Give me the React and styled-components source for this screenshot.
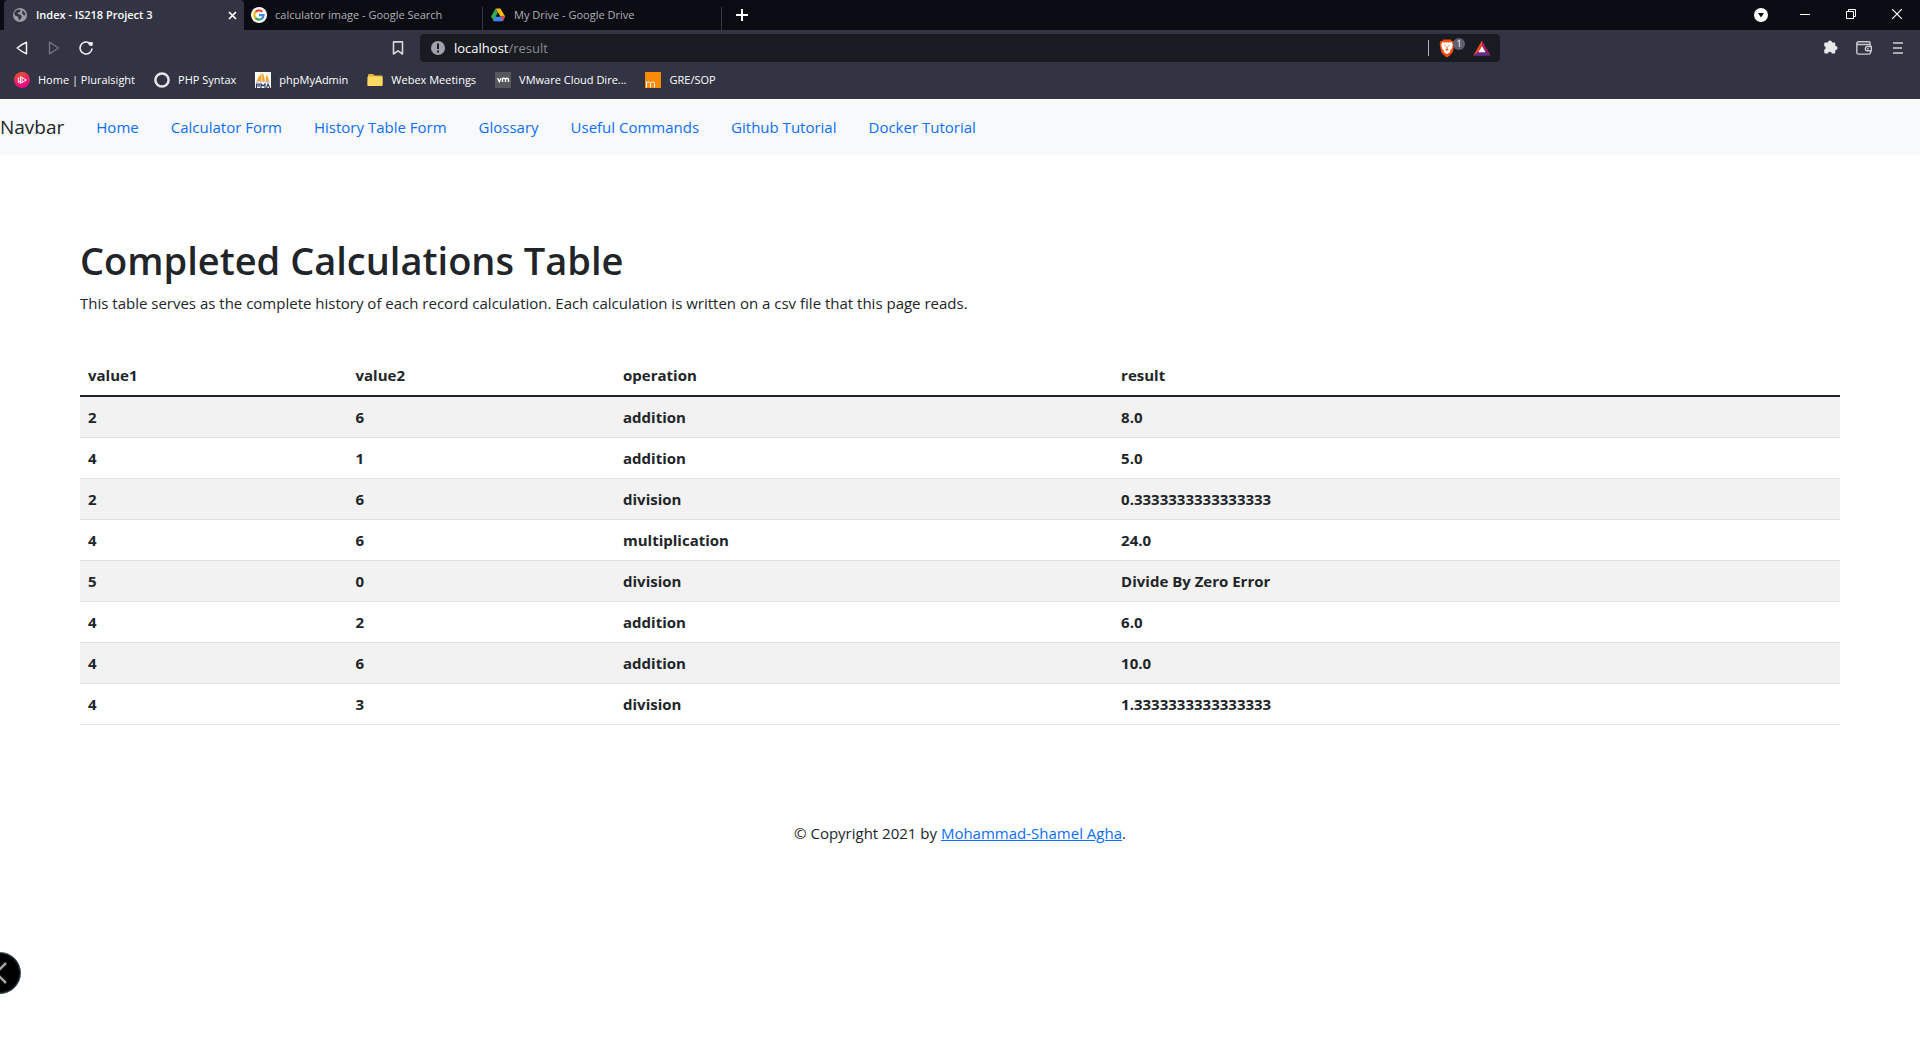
import React from 'react';
import styled, { createGlobalStyle } from 'styled-components';

const GlobalStyle = createGlobalStyle`
  *, *::before, *::after { box-sizing: border-box; }
  body {
    margin: 0;
    background: #fff;
    color: #212529;
    font-family: "Segoe UI", "Open Sans", "Noto Sans", sans-serif;
    font-size: 15px;
    line-height: 24px;
  }
  button { font: inherit; border: 0; background: none; padding: 0; color: inherit; }
  svg { display: block; flex: none; }
`;

/* ---------- browser window ---------- */

const Chrome = styled.header`
  background: #323443;
  color: #fff;
  font-size: 11px;
  line-height: 16px;
`;

const TabStrip = styled.div`
  display: flex;
  align-items: stretch;
  height: 30px;
  padding-left: 4px;
  background: #0b0b14;
`;

const Tab = styled.div`
  display: flex;
  align-items: center;
  gap: 8px;
  width: ${p => (p.$active ? 240 : 239)}px;
  padding: 0 7px 0 ${p => (p.$active ? 8 : 7)}px;
  border-radius: ${p => (p.$active ? '4px 4px 0 0' : '0')};
  background: ${p => (p.$active ? '#323443' : 'transparent')};
  color: ${p => (p.$active ? '#fff' : '#b0b1b5')};
  font-weight: ${p => (p.$active ? 600 : 400)};
`;

const TabTitle = styled.span`
  flex: 1;
  white-space: nowrap;
`;

const TabDivider = styled.span`
  align-self: flex-end;
  width: 1px;
  height: 23px;
  margin-right: -7px;
  background: #38393f;
`;

const IconButton = styled.button`
  display: flex;
  align-items: center;
  justify-content: center;
  width: ${p => p.$w || 32}px;
  height: ${p => p.$h || 28}px;
`;

const WindowControls = styled.div`
  display: flex;
  margin-left: auto;
`;

const Toolbar = styled.div`
  display: grid;
  grid-template-columns: 1fr minmax(0, 1080px) 1fr;
  padding-top: 4px;
`;

const ToolGroup = styled.div`
  display: flex;
  justify-content: ${p => (p.$end ? 'flex-end' : 'flex-start')};
  padding: 0 ${p => (p.$end ? 5 : 6)}px 0 6px;
`;

const BookmarkSlot = styled.div`
  display: flex;
  margin-left: auto;
`;

const AddressBar = styled.div`
  display: flex;
  align-items: center;
  height: 28px;
  padding: 0 7px 0 10px;
  border-radius: 4px;
  background: #191b22;
  font-size: 13px;
`;

const Address = styled.div`
  flex: 1;
  padding-left: 8px;
  color: #8a8b8f;
`;

const Host = styled.span`
  color: #fff;
`;

const BarDivider = styled.span`
  width: 1px;
  height: 16px;
  margin-right: 10px;
  background: #b5b6ba;
`;

const ShieldButton = styled.button`
  position: relative;
  width: 26px;
  height: 20px;
  margin-right: 6px;
`;

const ShieldCount = styled.span`
  position: absolute;
  top: 0;
  right: 0;
  min-width: 12px;
  border-radius: 6px;
  background: #5f6172;
  font-size: 9px;
  line-height: 12px;
  text-align: center;
`;

const BookmarkBar = styled.nav`
  display: flex;
  gap: 19px;
  height: 37px;
  padding: 10px 14px;
`;

const BookmarkLink = styled.a`
  display: flex;
  align-items: center;
  gap: 8px;
  height: 16px;
  color: #fff;
  text-decoration: none;
  white-space: nowrap;
`;

/* ---------- page ---------- */

const Navbar = styled.nav`
  display: flex;
  align-items: center;
  height: 56px;
  background: #f8f9fa;
`;

const Brand = styled.a`
  margin-right: 16px;
  color: #212529;
  font-size: 19px;
  text-decoration: none;
`;

const NavList = styled.ul`
  display: flex;
  margin: 0;
  padding: 0;
  list-style: none;
`;

const NavLink = styled.a`
  display: block;
  padding: 8px 16px;
  color: #0d6efd;
  text-decoration: none;
`;

const Main = styled.main`
  padding: 80px;
`;

const Title = styled.h1`
  margin: 0 0 6px;
  font-size: 38px;
  font-weight: 600;
  line-height: 50px;
`;

const Lead = styled.p`
  margin: 0 0 40px;
`;

const Table = styled.table`
  width: 100%;
  margin-bottom: 16px;
  border-collapse: collapse;
  table-layout: fixed;
  text-align: left;
  font-weight: 700;
`;

const Col = styled.col`
  width: ${p => p.$w};
`;

const HeadCell = styled.th`
  height: 41px;
  padding: 8px;
  border-bottom: 2px solid #212529;
`;

const Row = styled.tr`
  background: ${p => (p.$striped ? '#f2f2f2' : '#fff')};
`;

const Cell = styled.td`
  padding: 8px;
  border-bottom: 1px solid #dee2e6;
`;

const Footer = styled.footer`
  text-align: center;
`;

const AuthorLink = styled.a`
  color: #0d6efd;
`;

const DrawerHandle = styled.button`
  position: fixed;
  left: -21px;
  bottom: 46px;
  display: flex;
  align-items: center;
  justify-content: flex-end;
  width: 42px;
  height: 42px;
  && { padding-right: 13px; border: 1px solid #3b5960; background: #000; }
  border-radius: 50%;
  box-shadow: inset 0 0 0 1px #1b1b1b;
`;

/* ---------- icons ---------- */

const Globe = () => (
  <svg width="16" height="16" viewBox="0 0 16 16">
    <circle cx="8" cy="8" r="7" fill="#9a9ca5" />
    <path d="M2.6 5.2C3.4 3.6 5.4 2.3 7.2 2.4L8.6 3.6 8 5 6.2 5.6 5.6 7 8 7.6 9.8 9 9.2 11 7.6 13.6 6.4 11.6 6.2 9.8 4 9 2.3 7.6Z" fill="#323443" />
    <path d="M10 3.2 12.2 4.8 13.5 7.6 12.6 8.8 11.2 7.6 10 6.8 10.6 5Z" fill="#323443" />
  </svg>
);

const GoogleLogo = () => (
  <svg width="16" height="16" viewBox="0 0 16 16">
    <circle cx="8" cy="8" r="8" fill="#fff" />
    <g fill="none" strokeWidth="2.2">
      <path d="M4.5 5.1A4.6 4.6 0 0 1 11.3 4.8" stroke="#ea4335" />
      <path d="M4.5 5A4.6 4.6 0 0 0 4.5 11" stroke="#fbbc05" />
      <path d="M4.5 11A4.6 4.6 0 0 0 11 11.5" stroke="#34a853" />
      <path d="M8 8.2H12.6A4.6 4.6 0 0 1 10.8 11.7" stroke="#4285f4" />
    </g>
  </svg>
);

const DriveLogo = () => (
  <svg width="16" height="16" viewBox="0 0 16 16">
    <path d="M5.6 1.5H10.4L15.2 9.6H10.3Z" fill="#fbbc04" />
    <path d="M5.6 1.5 8 5.8 3.6 13.8 1 9.5Z" fill="#34a853" />
    <path d="M5.2 9.6H15.2L12.7 14.2H3.2Z" fill="#4285f4" />
    <path d="M10.5 9.6H15.2L12.9 14Z" fill="#ea4335" />
    <path d="M8 5.8 10.2 9.6H5.8Z" fill="#0b0b14" />
  </svg>
);

const CloseTab = () => (
  <svg width="9" height="9" viewBox="0 0 9 9"><path d="M1 1 8 8M8 1 1 8" stroke="#fff" strokeWidth="1.7" /></svg>
);
const Plus = () => (
  <svg width="12" height="12" viewBox="0 0 12 12"><path d="M6 0V12M0 6H12" stroke="#fff" strokeWidth="2" /></svg>
);
const TabSearch = () => (
  <svg width="14" height="14" viewBox="0 0 14 14"><circle cx="7" cy="7" r="7" fill="#fff" /><path d="M4 5H10L7 9.5Z" fill="#0b0b14" /></svg>
);
const Minimise = () => (
  <svg width="10" height="10" viewBox="0 0 10 10"><path d="M0 5.5H10" stroke="#fff" /></svg>
);
const Restore = () => (
  <svg width="10" height="10" viewBox="0 0 10 10"><path d="M.5 2.5H7.5V9.5H.5ZM2.5 2.5V.5H9.5V7.5H7.5" fill="none" stroke="#fff" /></svg>
);
const CloseWindow = () => (
  <svg width="10" height="10" viewBox="0 0 10 10"><path d="M0 0 10 10M10 0 0 10" stroke="#fff" strokeWidth="1.2" /></svg>
);
const Back = () => (
  <svg width="12" height="14" viewBox="0 0 12 14"><path d="M10.5 1.2V12.8Q6 11 1.2 7 6 3 10.5 1.2Z" fill="none" stroke="#f0f0f2" strokeWidth="1.5" strokeLinejoin="round" /></svg>
);
const Forward = () => (
  <svg width="12" height="14" viewBox="0 0 12 14"><path d="M1.5 1.2V12.8L10.5 7Z" fill="none" stroke="#6f717e" strokeWidth="1.4" strokeLinejoin="round" /></svg>
);
const Reload = () => (
  <svg width="16" height="16" viewBox="0 0 16 16">
    <path d="M11.3 3A6 6 0 1 0 14 8.5" fill="none" stroke="#f0f0f2" strokeWidth="1.6" />
    <path d="M10 2.6Q11.8 3 12.3 1.7L15 2.5 14.4 6 11 5.6Z" fill="#f0f0f2" />
  </svg>
);
const Ribbon = () => (
  <svg width="12" height="14" viewBox="0 0 12 14"><path d="M1.5.9H10.5V13L6 9.8 1.5 13Z" fill="none" stroke="#d5d6da" strokeWidth="1.6" strokeLinejoin="round" /></svg>
);
const Info = () => (
  <svg width="16" height="16" viewBox="0 0 16 16"><circle cx="8" cy="8" r="7" fill="#a0a2ab" /><path d="M7 3.5H9V9H7ZM7 10.5H9V12.5H7Z" fill="#191b22" /></svg>
);
const Shield = () => (
  <svg width="16" height="19" viewBox="0 0 16 19">
    <path d="M4.5.5H11.5L13 2 14.5 2 15.3 4.8 14 12.5Q13.5 14.5 8 18.5 2.5 14.5 2 12.5L.7 4.8 1.5 2H3Z" fill="#fb4b0b" />
    <path d="M3.6 3 6.2 3.6 8 3.2 9.8 3.6 12.4 3 13.7 5.4 13 9.5 11.2 11.5 11.2 13 8 15.2 4.8 13 4.8 11.5 3 9.5 2.3 5.4Z" fill="#fff" />
    <path d="M4.5 6.3 7 6.8V7.6ZM11.5 6.3 9 6.8V7.6ZM7.5 7.5H8.5V10L9.8 10.8 8 11.7 6.2 10.8 7.5 10Z" fill="#fb4b0b" />
  </svg>
);
const Triangle = () => (
  <svg width="18" height="16" viewBox="0 0 18 16">
    <path d="M9 .4V6L5.5 12 .2 15.8Z" fill="#ff4724" />
    <path d="M9 .4 17.8 15.8 12.5 12 9 6Z" fill="#9e1f63" />
    <path d="M.2 15.8 5.5 12H12.5L17.8 15.8Z" fill="#662d91" />
    <path d="M9 6 12.6 12.3H5.4Z" fill="#fff" />
  </svg>
);
const Puzzle = () => (
  <svg width="16" height="16" viewBox="0 0 16 16">
    <path d="M5 3.5A2 2 0 0 1 9 3.5H11.2Q12.3 3.5 12.3 4.7V7A2 2 0 0 1 12.8 11L12.3 11V13.3Q12.3 14.5 11.1 14.5H8.7A1.8 1.8 0 0 0 5 14.5H2.5Q1.2 14.5 1.2 13.3V10.7A1.9 1.9 0 0 0 1.2 7V4.7Q1.2 3.5 2.4 3.5Z" fill="#e8e8ea" transform="translate(1 -1)" />
  </svg>
);
const Wallet = () => (
  <svg width="16" height="14" viewBox="0 0 16 14">
    <g fill="none" stroke="#c9cace" strokeWidth="1.4">
      <path d="M14 3.5V2Q14 .8 12.8.8H2.5Q.8.8.8 2.5V11.5Q.8 13.1 2.5 13.1H13Q14.5 13.1 14.5 11.5V10M1 2.8Q1.5 3.5 2.5 3.5H13Q14.5 3.5 14.5 5" />
      <path d="M15.3 5.5H11A2.2 2.2 0 0 0 11 9.8H15.3ZM11 7.7H12.5" />
    </g>
  </svg>
);
const Menu = () => (
  <svg width="10" height="12" viewBox="0 0 10 12"><path d="M0 1H10M0 6H9M0 11H10" stroke="#d0d1d5" strokeWidth="1.7" /></svg>
);
const Pluralsight = () => (
  <svg width="16" height="16" viewBox="0 0 16 16">
    <defs><linearGradient id="ps" x1="0" y1="0" x2="0.3" y2="1"><stop offset="0" stopColor="#f05a28" /><stop offset="1" stopColor="#ec008c" /></linearGradient></defs>
    <circle cx="8" cy="8" r="8" fill="url(#ps)" />
    <path d="M6.3 4.5 12.3 8 6.3 11.5ZM8 5.8V10.3M4.3 5.6V10.4L6 9.3" fill="none" stroke="#fff" strokeWidth="1" />
  </svg>
);
const Ring = () => (
  <svg width="16" height="16" viewBox="0 0 16 16"><circle cx="8" cy="8" r="6.6" fill="none" stroke="#e4e5e8" strokeWidth="2.5" /></svg>
);
const PhpMyAdmin = () => (
  <svg width="16" height="16" viewBox="0 0 16 16">
    <rect width="16" height="16" fill="#fff" />
    <path d="M6.5 1Q3 5 1.5 9.6L6.5 9Z" fill="#f8a22d" />
    <path d="M7.3.5Q10 4 10 9.3L7.3 9Z" fill="#f89c0e" />
    <path d="M11 2.5Q14 5 14 10L11 9.4Z" fill="#f8a22d" />
    <path d="M1 10.3Q8 8.8 15 10.3" fill="none" stroke="#9aa0ac" strokeWidth=".7" />
    <path d="M1.5 16V12H4.2V14H1.5M6 16V12L8 14 10 12V16M11.5 16 13 12 14.8 16" fill="none" stroke="#33375e" strokeWidth="1.2" />
  </svg>
);
const Folder = () => (
  <svg width="16" height="16" viewBox="0 0 16 16">
    <path d="M1 3Q1 2 2 2H6L7.5 3.5H14.5Q15.5 3.5 15.5 4.5V13Q15.5 14 14.5 14H1.5Q.5 14 .5 13Z" fill="#e7b034" />
    <path d="M.5 5.5Q.5 4.5 1.5 4.5H14.5Q15.5 4.5 15.5 5.5V13Q15.5 14 14.5 14H1.5Q.5 14 .5 13Z" fill="#ffd964" />
  </svg>
);
const Vmware = () => (
  <svg width="16" height="16" viewBox="0 0 16 16">
    <rect width="16" height="16" fill="#57585a" />
    <path d="M2.5 6 4.3 9.7 6 6.2M7.5 10V7Q7.7 6 9 6.2 10.5 6.2 10.5 7.5V10M10.5 7.5Q10.7 6.2 12 6.2 13.5 6.2 13.5 7.5V10" fill="none" stroke="#fff" strokeWidth="1.4" />
  </svg>
);
const Magoosh = () => (
  <svg width="16" height="16" viewBox="0 0 16 16">
    <rect width="16" height="16" fill="#f98b08" />
    <path d="M1.5 15.5V9.5M1.5 11Q2 10 3.5 10 5.5 10 5.5 11.5V15.5M5.5 11.5Q6 10 7.5 10 9.5 10 9.5 11.5V15.5" fill="none" stroke="#fff" />
  </svg>
);
const Chevron = () => (
  <svg width="8" height="22" viewBox="0 0 8 22"><path d="M7 1 -3 11 7 21" fill="none" stroke="#a5a5a5" strokeWidth="2.5" /></svg>
);

/* ---------- data ---------- */

const bookmarks = [
  ['Home | Pluralsight', Pluralsight],
  ['PHP Syntax', Ring],
  ['phpMyAdmin', PhpMyAdmin],
  ['Webex Meetings', Folder],
  ['VMware Cloud Dire...', Vmware],
  ['GRE/SOP', Magoosh],
];

const links = ['Home', 'Calculator Form', 'History Table Form', 'Glossary', 'Useful Commands', 'Github Tutorial', 'Docker Tutorial'];

const columns = [['value1', '15.2%'], ['value2', '15.2%'], ['operation', '28.3%'], ['result', '41.3%']];

const records = [
  ['2', '6', 'addition', '8.0'],
  ['4', '1', 'addition', '5.0'],
  ['2', '6', 'division', '0.3333333333333333'],
  ['4', '6', 'multiplication', '24.0'],
  ['5', '0', 'division', 'Divide By Zero Error'],
  ['4', '2', 'addition', '6.0'],
  ['4', '6', 'addition', '10.0'],
  ['4', '3', 'division', '1.3333333333333333'],
];

export default function App() {
  return (
    <>
      <GlobalStyle />
      <Chrome>
        <TabStrip>
          <Tab $active>
            <Globe />
            <TabTitle>Index - IS218 Project 3</TabTitle>
            <IconButton $w={9} $h={16} aria-label="Close tab"><CloseTab /></IconButton>
          </Tab>
          <Tab>
            <GoogleLogo />
            <TabTitle>calculator image - Google Search</TabTitle>
            <TabDivider />
          </Tab>
          <Tab>
            <DriveLogo />
            <TabTitle>My Drive - Google Drive</TabTitle>
            <TabDivider />
          </Tab>
          <IconButton $w={40} $h={30} aria-label="New tab"><Plus /></IconButton>
          <WindowControls>
            <IconButton $w={42} $h={30} aria-label="Search tabs"><TabSearch /></IconButton>
            <IconButton $w={46} aria-label="Minimise"><Minimise /></IconButton>
            <IconButton $w={46} aria-label="Restore"><Restore /></IconButton>
            <IconButton $w={46} aria-label="Close"><CloseWindow /></IconButton>
          </WindowControls>
        </TabStrip>
        <Toolbar>
          <ToolGroup>
            <IconButton aria-label="Back"><Back /></IconButton>
            <IconButton aria-label="Forward"><Forward /></IconButton>
            <IconButton aria-label="Reload"><Reload /></IconButton>
            <BookmarkSlot><IconButton aria-label="Bookmark this page"><Ribbon /></IconButton></BookmarkSlot>
          </ToolGroup>
          <AddressBar>
            <Info />
            <Address><Host>localhost</Host>/result</Address>
            <BarDivider />
            <ShieldButton aria-label="Shields"><Shield /><ShieldCount>1</ShieldCount></ShieldButton>
            <IconButton $w={22} aria-label="Rewards"><Triangle /></IconButton>
          </AddressBar>
          <ToolGroup $end>
            <IconButton $w={34} aria-label="Extensions"><Puzzle /></IconButton>
            <IconButton $w={34} aria-label="Wallet"><Wallet /></IconButton>
            <IconButton $w={34} aria-label="Menu"><Menu /></IconButton>
          </ToolGroup>
        </Toolbar>
        <BookmarkBar>
          {bookmarks.map(([label, Icon]) => (
            <BookmarkLink href="#" key={label}><Icon />{label}</BookmarkLink>
          ))}
        </BookmarkBar>
      </Chrome>
      <Navbar>
        <Brand href="#">Navbar</Brand>
        <NavList>
          {links.map(label => (
            <li key={label}><NavLink href="#">{label}</NavLink></li>
          ))}
        </NavList>
      </Navbar>
      <Main>
        <Title>Completed Calculations Table</Title>
        <Lead>This table serves as the complete history of each record calculation. Each calculation is written on a csv file that this page reads.</Lead>
        <Table>
          <colgroup>{columns.map(([name, w]) => <Col key={name} $w={w} />)}</colgroup>
          <thead>
            <tr>{columns.map(([name]) => <HeadCell key={name} scope="col">{name}</HeadCell>)}</tr>
          </thead>
          <tbody>
            {records.map((record, i) => (
              <Row key={i} $striped={i % 2 === 0}>
                {record.map((value, j) => <Cell key={j}>{value}</Cell>)}
              </Row>
            ))}
          </tbody>
        </Table>
      </Main>
      <Footer>© Copyright 2021 by <AuthorLink href="#">Mohammad-Shamel Agha</AuthorLink>.</Footer>
      <DrawerHandle aria-label="Open drawer"><Chevron /></DrawerHandle>
    </>
  );
}
